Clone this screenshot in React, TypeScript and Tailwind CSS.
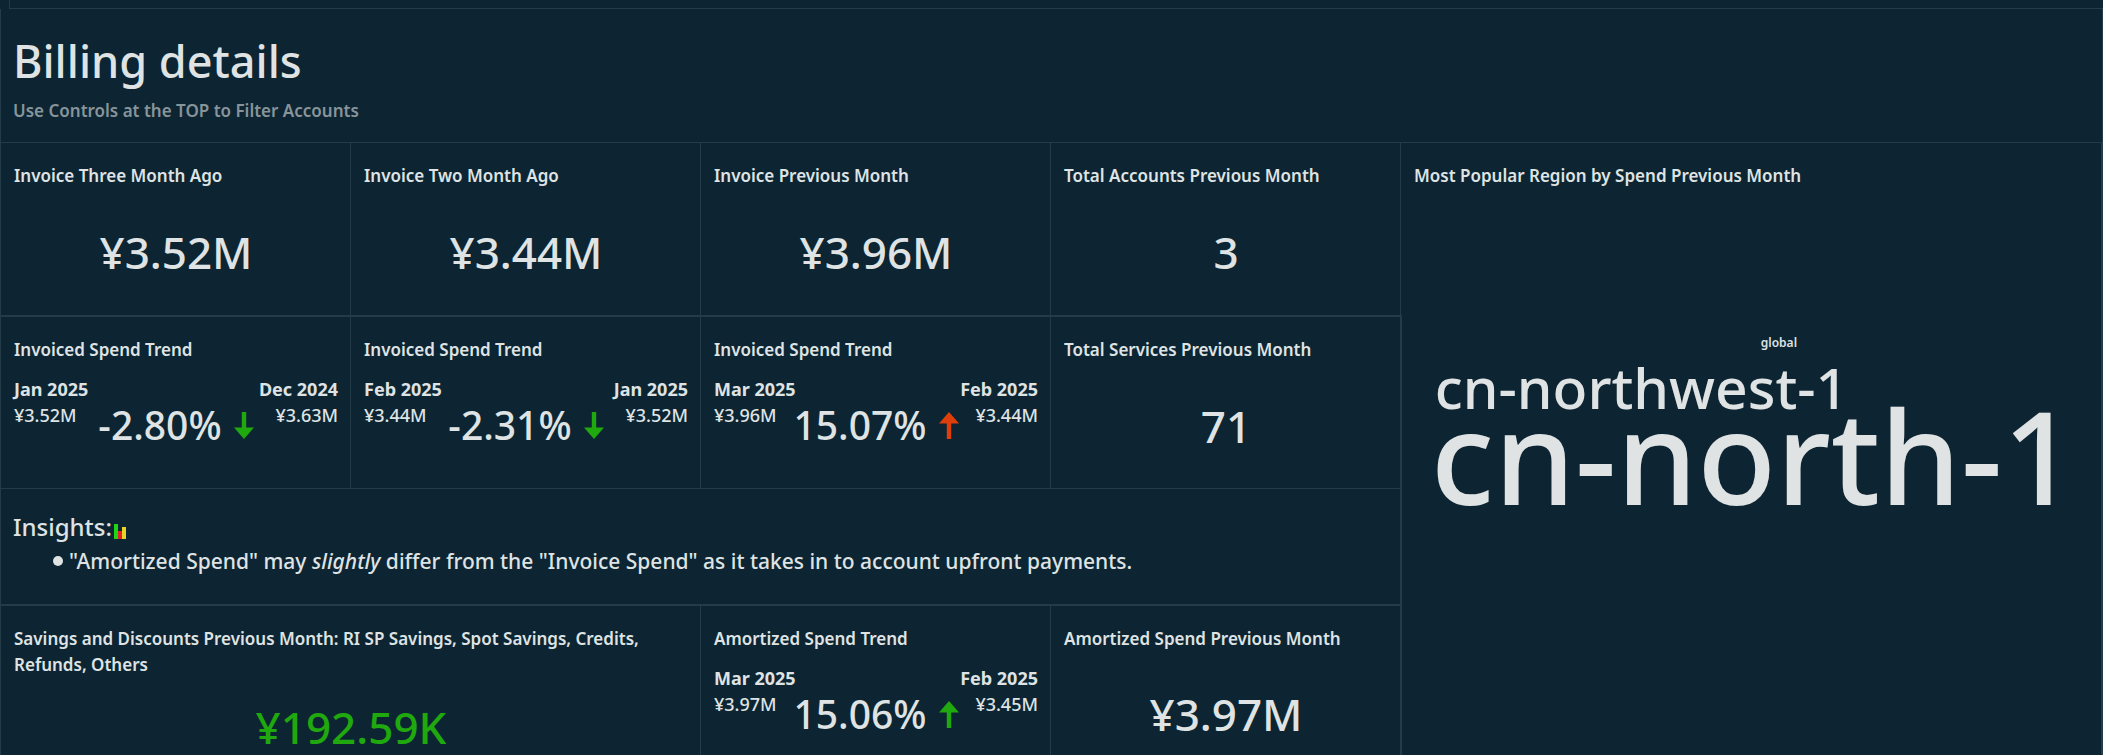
import React from "react";
import clsx from "clsx";

type Direction = "up" | "down";

interface TrendProps {
	title: string;
	current: { month: string; value: string };
	previous: { month: string; value: string };
	change: string;
	direction: Direction;
	color: string;
}

const GREEN = "text-[#20a80f]";
const ORANGE = "text-[#de3f0a]";

const invoices = [
	{ title: "Invoice Three Month Ago", value: "¥3.52M" },
	{ title: "Invoice Two Month Ago", value: "¥3.44M" },
	{ title: "Invoice Previous Month", value: "¥3.96M" },
	{ title: "Total Accounts Previous Month", value: "3" },
];

const invoicedTrends: TrendProps[] = [
	{
		title: "Invoiced Spend Trend",
		current: { month: "Jan 2025", value: "¥3.52M" },
		previous: { month: "Dec 2024", value: "¥3.63M" },
		change: "-2.80%",
		direction: "down",
		color: GREEN,
	},
	{
		title: "Invoiced Spend Trend",
		current: { month: "Feb 2025", value: "¥3.44M" },
		previous: { month: "Jan 2025", value: "¥3.52M" },
		change: "-2.31%",
		direction: "down",
		color: GREEN,
	},
	{
		title: "Invoiced Spend Trend",
		current: { month: "Mar 2025", value: "¥3.96M" },
		previous: { month: "Feb 2025", value: "¥3.44M" },
		change: "15.07%",
		direction: "up",
		color: ORANGE,
	},
];

const Arrow = ({ direction, color }: { direction: Direction; color: string }) => (
	<svg
		width="20"
		height="27"
		viewBox="0 0 20 27"
		fill="currentColor"
		className={clsx("shrink-0", color, direction === "up" && "rotate-180")}>
		<path d="M7.8 0h4.4v15.5H20L10 27 0 15.5h7.8z" />
	</svg>
);

const BarsIcon = () => (
	<svg width="12" height="15" viewBox="0 0 12 15">
		<rect x="0" y="0" width="4" height="15" fill="#1fd615" />
		<rect x="4" y="7" width="4" height="8" fill="#e0202c" />
		<rect x="8" y="3" width="4" height="12" fill="#e8d325" />
	</svg>
);

const Card = ({
	title,
	className,
	children,
}: {
	title: string;
	className?: string;
	children: React.ReactNode;
}) => (
	<article
		className={clsx(
			"flex min-w-0 flex-col border-[#243b48] pt-5 pr-3 pl-[13px]",
			className,
		)}>
		<h2 className="text-[17px] leading-[26px] font-semibold">{title}</h2>
		{children}
	</article>
);

const Kpi = ({
	title,
	value,
	color,
	className,
}: {
	title: string;
	value: string;
	color?: string;
	className?: string;
}) => (
	<Card title={title} className={clsx("border-r", className)}>
		<p
			className={clsx(
				"flex flex-1 items-center justify-center text-[44px] leading-none",
				color,
			)}>
			{value}
		</p>
	</Card>
);

const Trend = ({ title, current, previous, change, direction, color }: TrendProps) => (
	<Card title={title} className="border-r">
		<div className="mt-3.5 flex justify-between text-[18px] leading-6 font-bold">
			<span>{current.month}</span>
			<span>{previous.month}</span>
		</div>
		<div className="mt-1 flex items-start justify-between text-[18px] leading-5">
			<span>{current.value}</span>
			<span className="flex items-center gap-3 text-[39px] leading-10">
				{change}
				<Arrow direction={direction} color={color} />
			</span>
			<span>{previous.value}</span>
		</div>
	</Card>
);

const App = () => {
	return (
		<main className="h-screen overflow-hidden bg-[#0d2532] font-['Noto_Sans',sans-serif] font-medium text-[#dfe3e4]">
			{/* Bottom edge of the controls sheet */}
			<div className="ml-[9px] h-[9px] border-b border-l border-[#243b48]" />

			<header className="border-x border-b border-[#243b48] px-3 pt-5 pb-[18px]">
				<h1 className="text-[45px] leading-[64px]">Billing details</h1>
				<p className="mt-[5px] text-[17px] leading-[26px] font-semibold text-[#87949a]">
					Use Controls at the TOP to Filter Accounts
				</p>
			</header>

			<div className="grid grid-cols-3 border-r-2 border-l border-[#243b48]">
				<section className="col-span-2">
					<div className="grid min-h-[172px] grid-cols-4">
						{invoices.map((item) => (
							<Kpi key={item.title} {...item} />
						))}
					</div>

					{/* Rows below the first share a heavier right edge */}
					<div className="-mr-px border-t-2 border-r border-[#243b48]">
						<div className="grid min-h-[171px] grid-cols-4">
							{invoicedTrends.map((item) => (
								<Trend key={item.current.month} {...item} />
							))}
							<Kpi title="Total Services Previous Month" value="71" />
						</div>

						<article className="border-t border-r border-b-2 border-[#243b48] px-3 pt-5 pb-[27px]">
							<h2 className="flex items-center gap-0.5 text-[24px] leading-9">
								Insights:
								<span className="pt-2">
									<BarsIcon />
								</span>
							</h2>
							<ul className="pl-10 text-[21px] leading-8">
								<li className="flex items-center gap-1.5">
									<span className="size-2.5 shrink-0 rounded-full bg-current" />
									<p>
										"Amortized Spend" may <em>slightly</em> differ from the
										"Invoice Spend" as it takes in to account upfront payments.
									</p>
								</li>
							</ul>
						</article>

						<div className="grid min-h-[170px] grid-cols-4">
							<Kpi
								title="Savings and Discounts Previous Month: RI SP Savings, Spot Savings, Credits, Refunds, Others"
								value="¥192.59K"
								color={GREEN}
								className="col-span-2"
							/>
							<Trend
								title="Amortized Spend Trend"
								current={{ month: "Mar 2025", value: "¥3.97M" }}
								previous={{ month: "Feb 2025", value: "¥3.45M" }}
								change="15.06%"
								direction="up"
								color={GREEN}
							/>
							<Kpi title="Amortized Spend Previous Month" value="¥3.97M" />
						</div>
					</div>
				</section>

				<Card title="Most Popular Region by Spend Previous Month">
					<div className="mx-auto mt-[146px] pl-1 whitespace-nowrap">
						<p className="mb-2 pl-[330px] text-[12px] leading-4 font-semibold">global</p>
						<p className="pl-1 text-[57px] leading-[56px]">cn-northwest-1</p>
						<p className="text-[129px] leading-[80px]">cn-north-1</p>
					</div>
				</Card>
			</div>
		</main>
	);
};

export default App;
